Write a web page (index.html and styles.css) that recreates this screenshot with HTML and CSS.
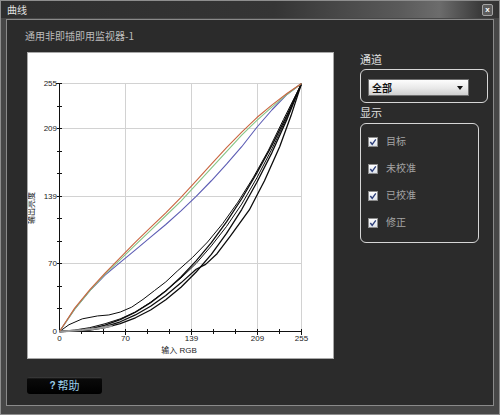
FILE: index.html
```html
<!DOCTYPE html>
<html>
<head>
<meta charset="utf-8">
<title>曲线</title>
<link rel="stylesheet" href="styles.css">
</head>
<body>
<div class="window">
	<div class="titlebar">
		<span class="title">曲线</span>
		<span class="close">x</span>
	</div>
	<div class="content">
		<div class="subtitle">通用非即插即用监视器-1</div>
		<div class="main">
			<div class="chart">
				<svg width="305" height="305" viewBox="0 0 305 305">
					<!-- grid -->
					<path class="grid" d="M97.5 30V278 M163.5 30V278 M229.5 30V278 M273.5 30V278 M31 30.5H274 M31 75.5H274 M31 143.5H274 M31 210.5H274"/>
					<!-- axes and ticks -->
					<path class="axis" d="M31.5 30V279 M31 278.5H274"/>
					<path class="axis" d="M28 30.5H34 M29 53.5H34 M29 75.5H34 M29 98.5H34 M29 120.5H34 M29 143.5H34 M29 165.5H34 M29 188.5H34 M29 210.5H34 M29 233.5H34 M29 255.5H34
						M53.5 276V281 M75.5 276V281 M97.5 276V282 M119.5 276V281 M141.5 276V281 M163.5 276V282 M185.5 276V281 M207.5 276V281 M229.5 276V282 M251.5 276V281 M273.5 276V282"/>
					<g class="ticks">
						<text x="29" y="33" text-anchor="end">255</text>
						<text x="29" y="78" text-anchor="end">209</text>
						<text x="29" y="146" text-anchor="end">139</text>
						<text x="29" y="213" text-anchor="end">70</text>
						<text x="29" y="281" text-anchor="end">0</text>
						<text x="31.5" y="288" text-anchor="middle">0</text>
						<text x="97.5" y="288" text-anchor="middle">70</text>
						<text x="163.5" y="288" text-anchor="middle">139</text>
						<text x="229.5" y="288" text-anchor="middle">209</text>
						<text x="273.5" y="288" text-anchor="middle">255</text>
					</g>
					<text class="axis-title" x="151" y="300" text-anchor="middle">输入 RGB</text>
					<text class="axis-title" transform="translate(6 155) rotate(-90)" text-anchor="middle">输出亮度</text>
					<!-- curves, drawn in 0..255 value space -->
					<g transform="translate(31.5 278.5) scale(0.94902 -0.97255)" fill="none">
						<polyline class="c-black" points="0,0 16,0.6 32,2.7 48,6.5 64,12.2 80,19.9 96,29.7 112,41.7 128,56 144,72.6 160,91.3 176,112.8 192,136.5 208,163.1 224,191.6 240,223 255,255"/>
						<polyline class="c-black" points="0,0 16,0.3 32,1.4 48,3.9 64,8 80,14.1 96,22.1 112,32.6 128,45.5 144,61.2 160,79.3 176,100.8 192,125.4 208,153.5 224,184.2 240,218.9 255,255"/>
						<polyline class="c-black thin" points="0,0 10,7 24,13 40,16 52,17 64,20 76,25 88,33 100,42 112,51 124,62 140,76 156,92 172,111 188,133 204,158 220,186 236,218 255,255"/>
						<polyline class="c-black" points="0,0 16,0.5 32,2 48,5 64,10 80,17 96,26 112,37 128,50 144,64 154,69 166,80 180,98 200,125 216,155 232,190 244,222 255,255"/>
						<polyline class="c-black thin" points="0,0 16,1.5 32,4 48,8 64,13 80,20 96,30 112,42 128,55 144,70 160,88 176,108 192,131 208,158 224,188 240,221 255,255"/>
						<polyline class="c-gray" points="0,0 10,0.5 24,1.5 40,3 56,6"/>
						<polyline class="c-blue" points="0,0 16,23 32,42 48,58 64,71 80,84 96,97 112,110 128,124 144,139 160,155 176,172 192,190 208,210 224,228 240,244 255,255"/>
						<polyline class="c-green" points="0,0 16,23 32,42 48,59 64,74 80,89 96,104 112,119 128,134 144,151 160,168 176,185 192,202 208,217 224,231 240,244 255,255"/>
						<polyline class="c-red" points="0,0 16,24 32,43 48,60 64,76 80,92 96,107 112,122 128,138 144,155 160,172 176,189 192,205 208,220 224,233 240,245 255,255"/>
					</g>
				</svg>
			</div>
			<div class="side">
				<div class="label">通道</div>
				<div class="group channel">
					<div class="select"><span>全部</span><i class="arrow"></i></div>
				</div>
				<div class="label label-show">显示</div>
				<div class="group show">
					<div class="row"><span class="check"><svg width="8" height="8" viewBox="0 0 8 8"><path d="M1.3 4 L3.2 6.3 L6.8 1.4"/></svg></span><span class="text">目标</span></div>
					<div class="row"><span class="check"><svg width="8" height="8" viewBox="0 0 8 8"><path d="M1.3 4 L3.2 6.3 L6.8 1.4"/></svg></span><span class="text">未校准</span></div>
					<div class="row"><span class="check"><svg width="8" height="8" viewBox="0 0 8 8"><path d="M1.3 4 L3.2 6.3 L6.8 1.4"/></svg></span><span class="text">已校准</span></div>
					<div class="row"><span class="check"><svg width="8" height="8" viewBox="0 0 8 8"><path d="M1.3 4 L3.2 6.3 L6.8 1.4"/></svg></span><span class="text">修正</span></div>
				</div>
			</div>
		</div>
		<div class="help"><b>?</b>帮助</div>
	</div>
</div>
</body>
</html>
```

FILE: styles.css
```css
* {
	box-sizing: border-box;
}

body {
	margin: 0;
	background: #2b2b2b;
	font-family: "Noto Sans CJK SC", "Liberation Sans", sans-serif;
}

.window {
	width: 500px;
	height: 415px;
	border: 1px solid #8e8e8e;
	background: #474747;
	display: flex;
	flex-direction: column;
}

.titlebar {
	height: 17px;
	display: flex;
	align-items: center;
	padding: 0 6px;
	background: linear-gradient(to right, #2e2e2e 0%, #353535 55%, #5a5a5a 80%, #6c6c6c 88%, #3c3c3c 96%, #333 100%);
}

.title {
	font-size: 10px;
	line-height: 12px;
	color: #e2e2e2;
}

.close {
	margin-left: auto;
	width: 11px;
	height: 12px;
	border: 1px solid #a4a4a4;
	border-radius: 2px;
	background: #5c5c5c;
	color: #fff;
	font: bold 8px/10px "Liberation Sans", sans-serif;
	text-align: center;
}

.content {
	flex: 1;
	margin: 1px 5px 8px;
	border: 1px solid #8a8a8a;
	background: #2b2b2b;
	padding: 10px 0 0 18px;
}

.subtitle {
	font-size: 10px;
	line-height: 12px;
	color: #bdbdbd;
}

.main {
	display: flex;
	margin-top: 10px;
}

.chart {
	margin-left: 2px;
	width: 307px;
	height: 307px;
	border: 1px solid #a8a8a8;
	background: #fff;
}

.chart svg {
	display: block;
}

.grid {
	fill: none;
	stroke: #d2d2d2;
	stroke-width: 1;
}

.axis {
	fill: none;
	stroke: #111;
	stroke-width: 1;
}

.ticks text {
	font: 8px "Liberation Sans", sans-serif;
	fill: #222;
}

.axis-title {
	font: 8px "Liberation Sans", "Noto Sans CJK SC", sans-serif;
	fill: #222;
}

.c-black,
.c-gray,
.c-red,
.c-green,
.c-blue {
	vector-effect: non-scaling-stroke;
	stroke-width: 1.1;
	stroke-linejoin: round;
}

.c-black {
	stroke: #0c0c0c;
	stroke-width: 1.3;
}

.c-black.thin {
	stroke-width: 1;
}

.c-gray {
	stroke: #9a9a9a;
	stroke-width: 2;
}

.c-red {
	stroke: #c9643f;
}

.c-green {
	stroke: #86c486;
}

.c-blue {
	stroke: #5c5cb4;
}

.side {
	margin-left: 26px;
	width: 130px;
}

.label {
	margin-top: 1px;
	font-size: 11px;
	line-height: 13px;
	color: #e0e0e0;
}

.label-show {
	margin-top: 3px;
}

.group {
	border: 1px solid #d6d6d6;
	border-radius: 6px;
}

.channel {
	width: 128px;
	height: 34px;
	margin-top: 3px;
	padding: 9px 0 0 7px;
}

.select {
	width: 101px;
	height: 17px;
	border: 1px solid #6e6e6e;
	background: linear-gradient(#fdfdfd, #e8e8e8 55%, #cfcfcf);
	display: flex;
	align-items: center;
	padding: 0 5px 0 3px;
	font-size: 10px;
	font-weight: bold;
	color: #111;
}

.arrow {
	margin-left: auto;
	border-left: 3px solid transparent;
	border-right: 3px solid transparent;
	border-top: 4px solid #111;
}

.show {
	width: 119px;
	height: 120px;
	margin-top: 4px;
	padding: 13px 0 0 7px;
	display: flex;
	flex-direction: column;
	gap: 17px;
}

.row {
	display: flex;
	align-items: center;
	height: 10px;
	font-size: 10px;
	color: #a4a4a4;
}

.check {
	width: 10px;
	height: 10px;
	border: 1px solid #8c8c8c;
	background: linear-gradient(#fff, #dde2ea);
	margin-right: 8px;
	display: flex;
	flex: none;
}

.check path {
	fill: none;
	stroke: #2d3f7a;
	stroke-width: 1.4;
}

.row .text {
	line-height: 12px;
	margin-top: -3px;
}

.help {
	margin: 18px 0 0 2px;
	width: 75px;
	height: 17px;
	border-radius: 3px;
	background: linear-gradient(#444, #0a0a0a 2px, #000);
	display: flex;
	align-items: center;
	justify-content: center;
	color: #9cd0ec;
	font-size: 11px;
	line-height: 13px;
}

.help b {
	font: bold 10px "Liberation Sans", sans-serif;
	margin-right: 2px;
}
```
